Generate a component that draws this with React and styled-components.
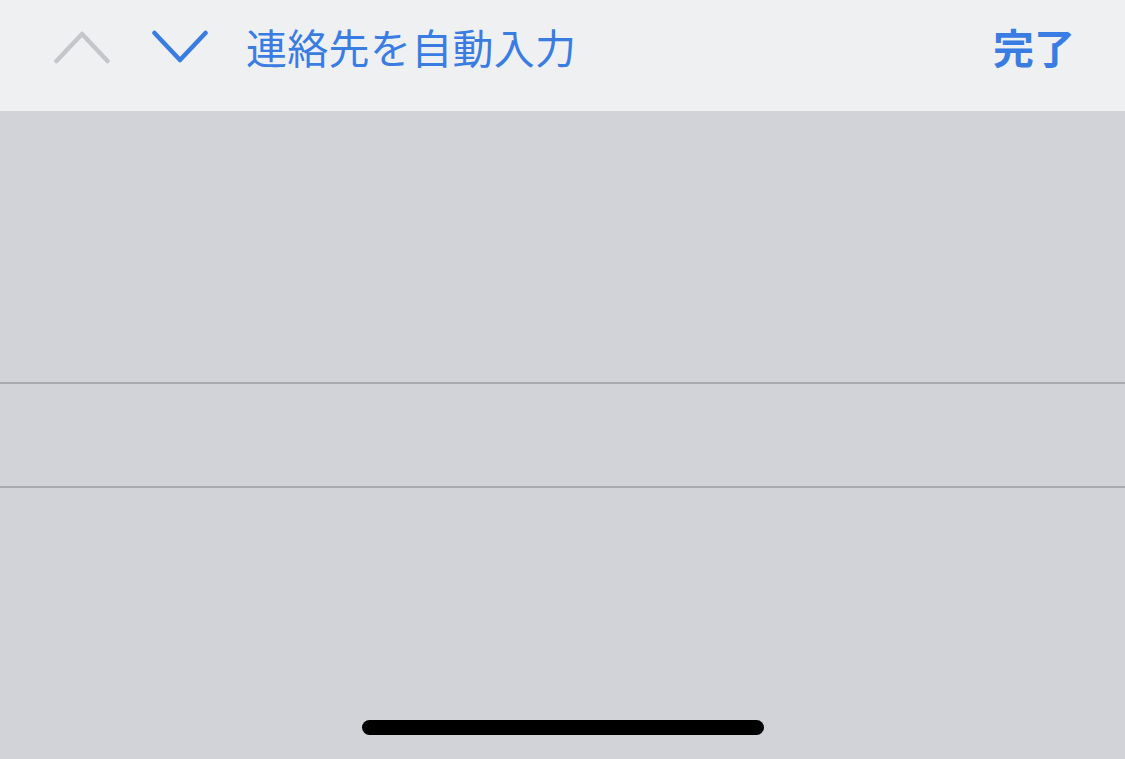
import styled, { createGlobalStyle } from "styled-components";

const GlobalStyle = createGlobalStyle`
  html, body {
    margin: 0;
    padding: 0;
    height: 100%;
    background: #d1d3d8;
  }
  #root {
    height: 100%;
  }
`;

const Screen = styled.div`
  display: flex;
  flex-direction: column;
  width: 1125px;
  height: 759px;
  background: #d1d3d8;
  font-family: "Noto Sans CJK JP", "Noto Sans", sans-serif;
  overflow: hidden;
`;

const Toolbar = styled.div`
  display: flex;
  align-items: center;
  height: 111px;
  flex-shrink: 0;
  padding: 0 50px 18px 54px;
  box-sizing: border-box;
  background: #eff0f2;
`;

const NavButton = styled.button`
  display: flex;
  align-items: center;
  justify-content: center;
  width: 56px;
  height: 40px;
  padding: 0;
  margin-right: ${(p) => p.$gap}px;
  border: none;
  background: none;
  color: ${(p) => (p.$disabled ? "#c5c6c9" : "#3a7de2")};
`;

const AutoFill = styled.span`
  font-size: 41px;
  font-weight: 400;
  color: #3a7de2;
  line-height: 1;
  letter-spacing: 0.3px;
`;

const Done = styled.span`
  margin-left: auto;
  font-size: 41px;
  font-weight: 700;
  color: #3a7de2;
  line-height: 1;
`;

const Keyboard = styled.div`
  display: flex;
  flex-direction: column;
  flex: 1;
`;

const Blank = styled.div`
  height: ${(p) => p.$h}px;
  flex-shrink: 0;
`;

const Divider = styled.div`
  height: 2px;
  flex-shrink: 0;
  background: #a9aaaf;
`;

const Bottom = styled.div`
  flex: 1;
  display: flex;
  align-items: flex-end;
  justify-content: center;
  padding-bottom: 24px;
`;

const HomeIndicator = styled.div`
  width: 402px;
  height: 15px;
  border-radius: 8px;
  background: #000;
`;

const Chevron = ({ up }) => (
  <svg width="56" height="34" viewBox="0 0 56 34" fill="none">
    <path
      d={up ? "M2.5 31 L28 4 L53.5 31" : "M2.5 3 L28 30 L53.5 3"}
      stroke="currentColor"
      strokeWidth="4.5"
      strokeLinecap="round"
      strokeLinejoin="round"
    />
  </svg>
);

export default function App() {
  return (
    <>
      <GlobalStyle />
      <Screen>
        <Toolbar>
          <NavButton $disabled $gap={42}>
            <Chevron up />
          </NavButton>
          <NavButton $gap={38}>
            <Chevron />
          </NavButton>
          <AutoFill>連絡先を自動入力</AutoFill>
          <Done>完了</Done>
        </Toolbar>
        <Keyboard>
          <Blank $h={271} />
          <Divider />
          <Blank $h={102} />
          <Divider />
          <Bottom>
            <HomeIndicator />
          </Bottom>
        </Keyboard>
      </Screen>
    </>
  );
}
